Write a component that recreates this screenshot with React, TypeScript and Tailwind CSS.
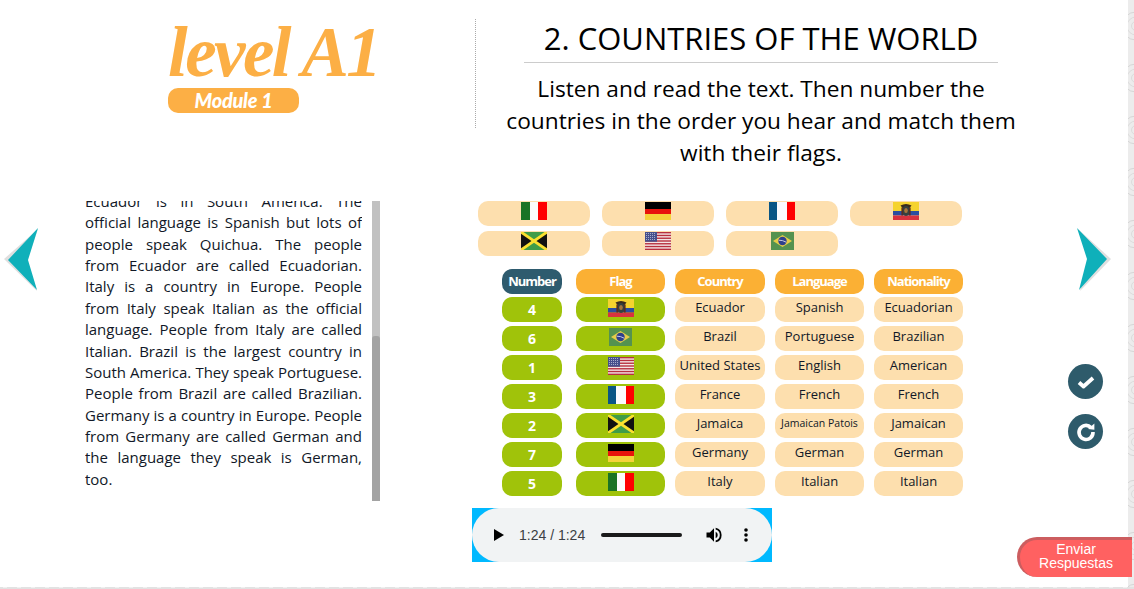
import React from "react";

const Italy = () => (
  <svg width="26" height="18" viewBox="0 0 26 18" className="block">
    <rect width="9" height="18" fill="#1a7325" />
    <rect x="9" width="8" height="18" fill="#fbfbfb" />
    <rect x="17" width="9" height="18" fill="#ff0000" />
  </svg>
);
const Germany = () => (
  <svg width="26" height="18" viewBox="0 0 26 18" className="block">
    <rect width="26" height="7" fill="#000000" />
    <rect y="7" width="26" height="5" fill="#e8140c" />
    <rect y="12" width="26" height="6" fill="#f5d33b" />
  </svg>
);
const France = () => (
  <svg width="26" height="18" viewBox="0 0 26 18" className="block">
    <rect width="8" height="18" fill="#0a5685" />
    <rect x="8" width="10" height="18" fill="#fbfbfd" />
    <rect x="18" width="8" height="18" fill="#ff0000" />
  </svg>
);
const Ecuador = () => (
  <svg width="26" height="18" viewBox="0 0 26 18" className="block">
    <rect width="26" height="9" fill="#f5d32f" />
    <rect y="9" width="26" height="4.5" fill="#2b4ea0" />
    <rect y="13.5" width="26" height="4.5" fill="#d8323f" />
    <path d="M7.5 3.5 Q13 0.5 18.5 3.5 L16.5 6 L9.5 6 Z" fill="#3a2c1c" />
    <ellipse cx="13" cy="9" rx="4" ry="5" fill="#35403f" />
    <ellipse cx="13" cy="8.5" rx="1.8" ry="2.6" fill="#a8763c" />
    <rect x="8.4" y="5.5" width="1.5" height="8" fill="#5a2a1c" />
    <rect x="16.1" y="5.5" width="1.5" height="8" fill="#5a2a1c" />
  </svg>
);
const Jamaica = () => (
  <svg width="26" height="18" viewBox="0 0 26 18" className="block">
    <rect width="26" height="18" fill="#3f9c49" />
    <path d="M0 0 L11 9 L0 18 Z M26 0 L15 9 L26 18 Z" fill="#111111" />
    <path d="M0 0 L26 18 M26 0 L0 18" stroke="#fbe02f" strokeWidth="2.8" />
  </svg>
);
const Usa = () => (
  <svg width="26" height="18" viewBox="0 0 26 18" className="block">
    <rect width="26" height="18" fill="#f3e6e6" />
    {[0, 2.77, 5.54, 8.31, 11.08, 13.85, 16.62].map((y) => (
      <rect key={y} y={y} width="26" height="1.38" fill="#b8303f" />
    ))}
    <rect width="12" height="9.7" fill="#46508c" />
    {[1.5, 3.5, 5.5, 7.5].map((y) =>
      [1.5, 3.5, 5.5, 7.5, 9.5].map((x) => <circle key={`${x}-${y}`} cx={x} cy={y} r="0.5" fill="#c8cce0" />)
    )}
  </svg>
);
const Brazil = () => (
  <svg width="23" height="18" viewBox="0 0 23 18" className="block">
    <rect width="23" height="18" fill="#55924f" />
    <path d="M11.5 3 L21 9 L11.5 15 L2 9 Z" fill="#e6cc48" />
    <circle cx="11.5" cy="9" r="4.2" fill="#2f3f8c" />
    <path d="M7.8 8.2 Q11.5 8 15.2 10.2" stroke="#d8d8e8" strokeWidth="0.9" fill="none" />
  </svg>
);

const chips = [Italy, Germany, France, Ecuador, Jamaica, Usa, Brazil];

const rows: [string, React.FC, string, string, string][] = [
  ["4", Ecuador, "Ecuador", "Spanish", "Ecuadorian"],
  ["6", Brazil, "Brazil", "Portuguese", "Brazilian"],
  ["1", Usa, "United States", "English", "American"],
  ["3", France, "France", "French", "French"],
  ["2", Jamaica, "Jamaica", "Jamaican Patois", "Jamaican"],
  ["7", Germany, "Germany", "German", "German"],
  ["5", Italy, "Italy", "Italian", "Italian"],
];

const Head = ({ children, dark }: { children: string; dark?: boolean }) => (
  <div
    className={`h-[25px] rounded-[10px] text-center text-[13px] font-bold leading-[25px] tracking-[-1px] text-white ${
      dark ? "w-[60px] bg-[#2e5b6e]" : "bg-[#fbb034]"
    }`}
  >
    {children}
  </div>
);

const Cell = ({ children, small }: { children: string; small?: boolean }) => (
  <div
    className={`h-[25px] whitespace-nowrap rounded-[10px] bg-[#fddfae] text-center leading-[20px] text-[#111827] ${
      small ? "text-[10.5px]" : "text-[13px]"
    }`}
  >
    {children}
  </div>
);

export default function App() {
  return (
    <div className="relative h-[589px] w-[1134px] overflow-hidden bg-white font-['Open_Sans',sans-serif] text-black">
      <header className="flex h-[201px]">
        <div className="w-[475px] pl-[168px] pt-[16px]">
          <div className="inline-flex flex-col">
            <span className="w-[215px] whitespace-nowrap font-['Liberation_Serif',serif] text-[71px] font-bold italic leading-[72px] tracking-[-2.6px] text-[#fcaf45]">
              level A1
            </span>
            <span className="h-[25px] w-[131px] rounded-[10px] bg-[#fcaf45] text-center font-['Lato',sans-serif] text-[20px] font-black italic leading-[24px] tracking-[-0.3px] text-white">
              Module 1
            </span>
          </div>
        </div>
        <div className="mt-[19px] h-[109px] border-l border-dotted border-[#aaaaaa]" />
        <div className="flex w-[570px] flex-col items-center pt-[18px]">
          <h1 className="w-[474px] border-b border-[#cccccc] pb-[3px] text-center text-[31px] font-normal leading-[41px]">
            2. COUNTRIES OF THE WORLD
          </h1>
          <p className="mt-[10px] text-center text-[22.7px] leading-[32px]">
            Listen and read the text. Then number the
            <br />
            countries in the order you hear and match them
            <br />
            with their flags.
          </p>
        </div>
      </header>

      <main className="flex">
        <section className="ml-[85px] flex h-[300px] gap-[10px]">
          <div className="h-[300px] w-[277px] overflow-hidden">
            <p className="-mt-[10px] text-justify text-[15px] leading-[21.36px] text-[#111827]">
              Ecuador is in South America. The official language is Spanish but lots of people speak Quichua. The people
              from Ecuador are called Ecuadorian. Italy is a country in Europe. People from Italy speak Italian as the
              official language. People from Italy are called Italian. Brazil is the largest country in South America.
              They speak Portuguese. People from Brazil are called Brazilian. Germany is a country in Europe. People from
              Germany are called German and the language they speak is German, too.
            </p>
          </div>
          <div className="flex h-[300px] w-[8px] flex-col justify-end bg-[#c1c1c1]">
            <div className="h-[165px] rounded-t-[3px] bg-[#a3a3a3]" />
          </div>
        </section>

        <section className="ml-[98px] flex flex-col">
          <div className="grid w-[484px] grid-cols-4 gap-x-[12px] gap-y-[5px]">
            {chips.map((F, i) => (
              <div key={i} className="flex h-[25px] justify-center rounded-[10px] bg-[#fddfae] pt-[1px]">
                <F />
              </div>
            ))}
          </div>

          <div className="ml-[24px] mt-[13px] grid grid-cols-[64px_89px_90px_89px_89px] gap-x-[10px] gap-y-[4px]">
            <Head dark>Number</Head>
            <Head>Flag</Head>
            <Head>Country</Head>
            <Head>Language</Head>
            <Head>Nationality</Head>
            {rows.map(([n, F, c, l, na], i) => (
              <React.Fragment key={n}>
                <div
                  className={`h-[25px] w-[60px] rounded-[10px] bg-[#a0c30a] text-center text-[14px] font-bold leading-[25px] text-white ${
                    i === 0 ? "-mt-px" : ""
                  }`}
                >
                  {n}
                </div>
                <div
                  className={`flex h-[25px] justify-center rounded-[10px] bg-[#a0c30a] pt-[2px] ${i === 0 ? "-mt-px" : ""}`}
                >
                  <F />
                </div>
                <div className={i === 0 ? "-mt-px" : ""}>
                  <Cell>{c}</Cell>
                </div>
                <div className={i === 0 ? "-mt-px" : ""}>
                  <Cell small={l === "Jamaican Patois"}>{l}</Cell>
                </div>
                <div className={i === 0 ? "-mt-px" : ""}>
                  <Cell>{na}</Cell>
                </div>
              </React.Fragment>
            ))}
          </div>

          <div className="-ml-[6px] mt-[12px] h-[54px] w-[300px] bg-[#00b9ff]">
            <div className="flex h-[54px] items-center rounded-[27px] bg-[#f1f3f4] pl-[22px] font-['Liberation_Sans',sans-serif] text-[14px] text-[#3c3f43]">
              <svg width="10" height="12" viewBox="0 0 10 12" className="shrink-0">
                <path d="M0 0 L10 6 L0 12 Z" fill="#000" />
              </svg>
              <span className="ml-[15px] w-[65px] whitespace-nowrap leading-[16px]">1:24 / 1:24</span>
              <div className="ml-[17px] h-[4px] w-[81px] rounded-full bg-[#1a1a1a]" />
              <svg width="20" height="20" viewBox="0 0 24 24" className="ml-[22px] shrink-0">
                <path
                  d="M3 9v6h4l5 5V4L7 9H3zm13.5 3A4.5 4.5 0 0 0 14 8v8a4.5 4.5 0 0 0 2.5-4zM14 3.2v2.1a7 7 0 0 1 0 13.4v2.1a9 9 0 0 0 0-17.6z"
                  fill="#000"
                />
              </svg>
              <svg width="4" height="14" viewBox="0 0 4 14" className="ml-[20px] shrink-0">
                <circle cx="2" cy="2" r="1.8" fill="#000" />
                <circle cx="2" cy="7" r="1.8" fill="#000" />
                <circle cx="2" cy="12" r="1.8" fill="#000" />
              </svg>
            </div>
          </div>
        </section>
      </main>

      {/* page frame pattern */}
      <svg className="absolute right-0 top-0 h-[589px] w-[6px]" viewBox="0 0 6 589">
        <defs>
          <pattern id="swirl" width="30" height="52" patternUnits="userSpaceOnUse">
            <rect width="30" height="52" fill="#ececec" />
            <circle cx="8" cy="26" r="14" fill="none" stroke="#d6d6d6" strokeWidth="1" />
            <circle cx="8" cy="26" r="9" fill="none" stroke="#dcdcdc" strokeWidth="1" />
            <circle cx="8" cy="26" r="4.5" fill="none" stroke="#dcdcdc" strokeWidth="1" />
          </pattern>
        </defs>
        <rect width="6" height="589" fill="url(#swirl)" />
      </svg>
      <svg className="absolute bottom-0 left-0 h-[2px] w-[1134px]" viewBox="0 0 1134 2">
        <defs>
          <pattern id="swirl2" width="14" height="2" patternUnits="userSpaceOnUse">
            <rect width="14" height="2" fill="#e2e2e2" />
            <rect x="3" width="4" height="1" fill="#f0f0f0" />
          </pattern>
        </defs>
        <rect width="1134" height="2" fill="url(#swirl2)" />
      </svg>

      {/* nav arrows */}
      <svg className="absolute left-0 top-[224px]" width="42" height="70" viewBox="0 0 42 70">
        <path d="M38 5 L4 35 L37 67 L27 37 Z" fill="#dfdfdf" />
        <path d="M38 4 L8 36 L37 66 L28 36 Z" fill="#0fb0ba" />
      </svg>
      <svg className="absolute left-[1072px] top-[224px]" width="42" height="70" viewBox="0 0 42 70">
        <path d="M6 5 L39 35 L8 67 L16 36 Z" fill="#dfdfdf" />
        <path d="M5 4 L35 35 L7 66 L15 35 Z" fill="#0fb0ba" />
      </svg>

      {/* round action buttons */}
      <div className="absolute left-[1068px] top-[364px] flex flex-col gap-[15px]">
        <button className="flex h-[35px] w-[35px] items-center justify-center rounded-full bg-[#2e5b6b]">
          <svg width="20" height="16" viewBox="0 0 20 16">
            <path d="M3 8.5 L7.5 12.5 L17 4" fill="none" stroke="#fff" strokeWidth="3.8" strokeLinejoin="round" />
          </svg>
        </button>
        <button className="flex h-[35px] w-[35px] items-center justify-center rounded-full bg-[#2e5b6b]">
          <svg width="22" height="22" viewBox="0 0 22 22">
            <path d="M16 6.5 A7 7 0 1 0 18 11" fill="none" stroke="#fff" strokeWidth="3.6" />
            <path d="M13 8 L19.4 8.8 L19.4 2.6 Z" fill="#fff" />
          </svg>
        </button>
      </div>

      {/* send button */}
      <button className="absolute left-[1017px] top-[537px] h-[40px] w-[115px] rounded-l-[20px] border-l-[3px] border-t-[3px] border-[#cc5d5f] bg-[#ff6161] pb-[5px] text-center font-['Liberation_Sans',sans-serif] text-[14px] leading-[14px] text-white">
        Enviar
        <br />
        Respuestas
      </button>
    </div>
  );
}
